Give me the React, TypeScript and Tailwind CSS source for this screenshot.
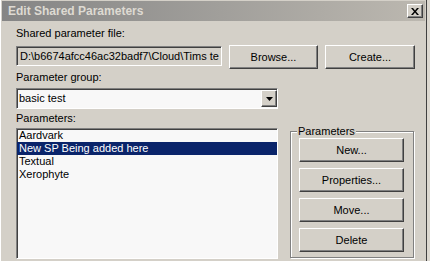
const raised =
  "border border-t-white border-l-white border-r-[#404040] border-b-[#404040] shadow-[inset_-1px_-1px_0_#808080] bg-[#d4d0c8]";
const sunken =
  "border border-t-[#808080] border-l-[#808080] border-r-white border-b-white shadow-[inset_1px_1px_0_#404040]";

const Button = ({ label, className }: { label: string; className: string }) => (
  <div className={`${raised} flex items-center justify-center ${className}`}>{label}</div>
);

const items = ["Aardvark", "New SP Being added here", "Textual", "Xerophyte"];

export default function App() {
  return (
    <div className="w-[430px] h-[261px] overflow-hidden bg-[#d4d0c8] flex font-['Liberation_Sans',Arial,sans-serif] text-[11px] leading-[13px] text-black">
      <div className="w-[427px] h-full border-l border-white border-r border-r-[#404040] flex flex-col pt-px">
        {/* title bar */}
        <div className="mx-px h-[20px] bg-linear-to-r from-[#858585] to-[#bcb8b0] flex items-center justify-between pl-[6px] pr-[2px]">
          <span className="font-bold text-[12px] text-[#dedad2]">Edit Shared Parameters</span>
          <div className={`${raised} w-[16px] h-[14px] flex items-center justify-center`}>
            <svg width="8" height="7" viewBox="0 0 8 7">
              <path d="M0 0 L2 0 L4 2.5 L6 0 L8 0 L5 3.5 L8 7 L6 7 L4 4.5 L2 7 L0 7 L3 3.5 Z" fill="#000" />
            </svg>
          </div>
        </div>

        <div className="pl-[15px] flex flex-col">
          <div className="mt-[6px]">Shared parameter file:</div>
          <div className="mt-[5px] flex items-start">
            <div className={`${sunken} mt-px h-[20px] w-[206px] flex items-center pl-[3px] overflow-hidden whitespace-nowrap`}>
              D:\b6674afcc46ac32badf7\Cloud\Tims te
            </div>
            <Button label="Browse..." className="ml-[7px] w-[89px] h-[24px]" />
            <Button label="Create..." className="ml-[7px] w-[90px] h-[24px]" />
          </div>

          <div className="mt-[2px]">Parameter group:</div>
          <div className={`${sunken} mt-[4px] h-[21px] w-[262px] bg-[#f8f8f8] flex items-center`}>
            <span className="flex-1 pl-[2px]">basic test</span>
            <div className={`${raised} w-[16px] h-[17px] flex items-center justify-center`}>
              <svg width="7" height="4" viewBox="0 0 7 4">
                <path d="M0 0 H7 L3.5 4 Z" fill="#000" />
              </svg>
            </div>
          </div>

          <div className="mt-[3px]">Parameters:</div>
          <div className="flex items-start">
            <div className={`${sunken} mt-[3px] h-[131px] w-[262px] bg-[#f8f8f8] flex flex-col`}>
              {items.map((item, i) => (
                <div
                  key={item}
                  className={`h-[13px] pl-[2px] whitespace-nowrap ${i === 1 ? "bg-[#0a246a] text-white" : ""}`}
                >
                  {item}
                </div>
              ))}
            </div>

            <fieldset className="ml-[12px] w-[124px] h-[133px] border border-[#808080] shadow-[inset_1px_1px_0_#fff,1px_1px_0_#fff]">
              <legend className="ml-[6px] px-[1px] bg-[#d4d0c8] leading-[13px]">Parameters</legend>
              <div className="flex flex-col gap-[6px] px-[8px]">
                <Button label="New..." className="w-[105px] h-[24px]" />
                <Button label="Properties..." className="w-[105px] h-[24px]" />
                <Button label="Move..." className="w-[105px] h-[24px]" />
                <Button label="Delete" className="w-[105px] h-[24px]" />
              </div>
            </fieldset>
          </div>
        </div>
      </div>
      <div className="flex-1 bg-[#dcd8d0]" />
    </div>
  );
}
